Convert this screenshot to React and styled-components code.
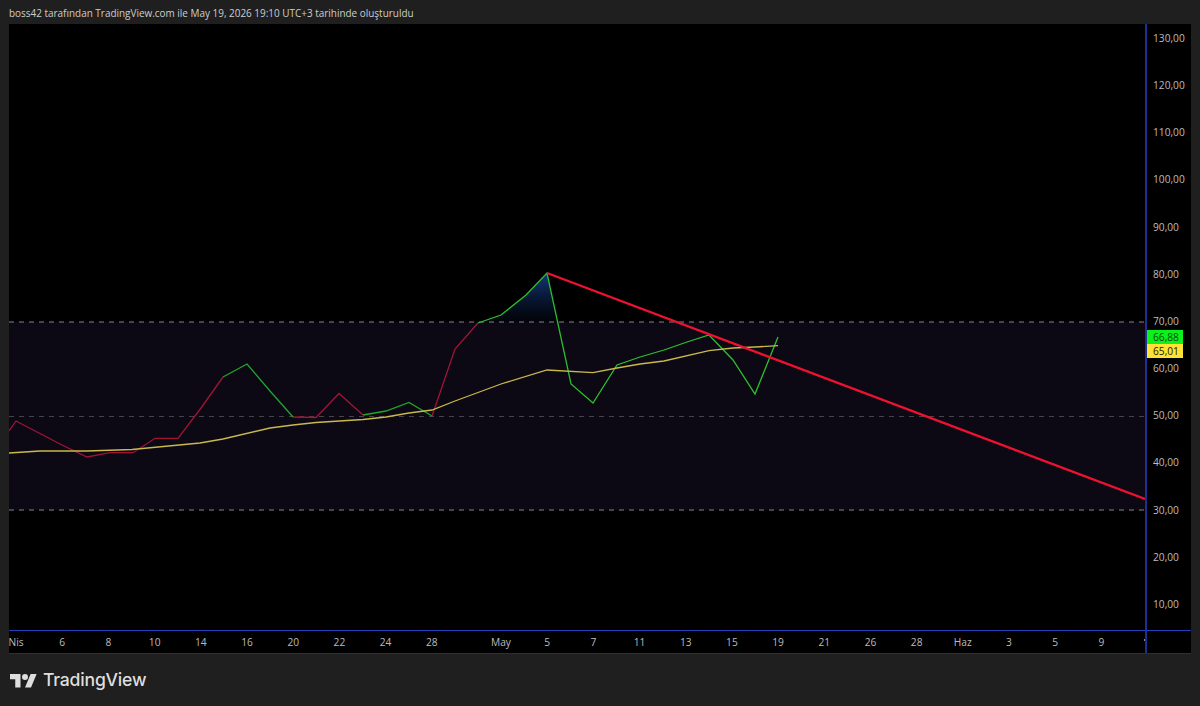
import styled, { createGlobalStyle } from "styled-components";

const GlobalStyle = createGlobalStyle`
  html, body {
    margin: 0;
    padding: 0;
    background: #1f1f1f;
  }
`;

const Page = styled.div`
  width: 1200px;
  height: 706px;
  display: flex;
  flex-direction: column;
  background: #1f1f1f;
  overflow: hidden;
  font-family: "Open Sans", "Liberation Sans", sans-serif;
`;

const Header = styled.div`
  height: 24px;
  padding: 7px 0 0 9px;
  box-sizing: border-box;
  font-size: 9.95px;
  line-height: 12px;
  color: #cdcdcd;
  white-space: nowrap;
`;

const Frame = styled.div`
  margin-left: 9px;
  width: 1182px;
  height: 630px;
  display: grid;
  grid-template-columns: 1136px 46px;
  grid-template-rows: 606px 23px;
  background: #000;
  border-bottom: 1px solid #303030;
  box-sizing: border-box;
`;

const Plot = styled.div`
  height: 606px;
  overflow: hidden;
`;

const ChartSvg = styled.svg`
  display: block;
`;

const PriceAxis = styled.div`
  position: relative;
  display: flex;
  flex-direction: column;
  gap: 35.17px;
  padding: 8px 0 0 6px;
  border-left: 2px solid #1b2f94;
`;

const Tick = styled.span`
  height: 12px;
  font-size: 10.2px;
  line-height: 12px;
  color: #bcbcbc;
`;

const PriceBadge = styled.span`
  position: absolute;
  left: 0;
  top: ${(p) => p.$top}px;
  width: 36px;
  height: 14px;
  padding-left: 6px;
  box-sizing: border-box;
  font-size: 10.2px;
  line-height: 14px;
  background: ${(p) => p.$bg};
  color: ${(p) => p.$fg};
`;

const TimeAxis = styled.div`
  display: flex;
  overflow: hidden;
  border-top: 1px solid #2440b8;
`;

const TimeTrack = styled.div`
  display: flex;
  margin-left: -16px;
  padding-top: 4px;
`;

const TimeLabel = styled.span`
  flex: 0 0 46.2px;
  margin-left: ${(p) => p.$offset || 0}px;
  text-align: center;
  font-size: 10.2px;
  line-height: 14px;
  color: #bcbcbc;
  font-weight: ${(p) => (p.$major ? 500 : 400)};
`;

const AxisCorner = styled.div`
  position: relative;
  border-top: 1px solid #2440b8;
  border-left: 2px solid #1b2f94;

  &::after {
    content: "";
    position: absolute;
    left: -3px;
    top: 8px;
    width: 1px;
    height: 2px;
    background: #8a8a8a;
  }
`;

const Footer = styled.div`
  flex: 1;
  display: flex;
  align-items: flex-start;
  gap: 6px;
  padding: 17px 0 0 10px;
`;

const Wordmark = styled.span`
  font-family: Inter, "Liberation Sans", sans-serif;
  font-size: 17.6px;
  font-weight: 500;
  line-height: 18px;
  letter-spacing: -0.2px;
  color: #dedede;
`;

const RSI_SEGMENTS = [
  { color: "#a01434", pts: "9,431 16,421 39,433 62,445 87,457 110,452.6 133,452.7 155,438.3 178,438.3 201,408 223,377" },
  { color: "#22a52a", pts: "223,377 247,364 270,391 293,417" },
  { color: "#a01434", pts: "293,417 316,417.5 339,393.5 363,415" },
  { color: "#22a52a", pts: "363,415 386,411 409,402.5 432,416" },
  { color: "#a01434", pts: "432,416 455,349 478,323" },
  { color: "#2cc02c", pts: "478,323 501,315 526,295 547,273 571,384 593,403 617,365 640,357 664,350 687,342 709,335 733,360 755,394 778,337" },
];

const RSI_MA =
  "9,453 40,451 87,451 132,449.5 200,443 223,439 270,428 293,425 316,422.5 363,419.5 386,417 409,413 432,410 455,401 501,384 547,370 593,372.7 617,368 640,364 664,361 709,350.7 733,348 755,347 778,345.7";

const PRICES = ["130,00", "120,00", "110,00", "100,00", "90,00", "80,00", "70,00", "60,00", "50,00", "40,00", "30,00", "20,00", "10,00"];

const DATES = [
  { label: "Nis", major: true },
  { label: "6" },
  { label: "8" },
  { label: "10" },
  { label: "14" },
  { label: "16" },
  { label: "20" },
  { label: "22" },
  { label: "24" },
  { label: "28" },
  { label: "May", major: true, offset: 23 },
  { label: "5" },
  { label: "7" },
  { label: "11" },
  { label: "13" },
  { label: "15" },
  { label: "19" },
  { label: "21" },
  { label: "26" },
  { label: "28" },
  { label: "Haz", major: true },
  { label: "3" },
  { label: "5" },
  { label: "9" },
];

const Chart = () => (
  <ChartSvg width="1136" height="606" viewBox="9 24 1136 606">
    <defs>
      <linearGradient id="peakFill" x1="0" y1="273" x2="0" y2="322" gradientUnits="userSpaceOnUse">
        <stop offset="0" stopColor="#123a80" />
        <stop offset="1" stopColor="#0a1a3a" stopOpacity="0.15" />
      </linearGradient>
    </defs>
    <rect x="9" y="322" width="1136" height="188" fill="#0c0914" />
    <polygon points="478,322 501,315 526,295 547,273 557.6,322" fill="url(#peakFill)" />
    <line x1="9" y1="322" x2="1145" y2="322" stroke="#85838c" strokeDasharray="5 5" />
    <line x1="9" y1="416.5" x2="1145" y2="416.5" stroke="#45434c" strokeDasharray="5 5" />
    <line x1="9" y1="510" x2="1145" y2="510" stroke="#85838c" strokeDasharray="5 5" />
    {RSI_SEGMENTS.map((seg) => (
      <polyline key={seg.pts} points={seg.pts} fill="none" stroke={seg.color} strokeWidth="1.3" />
    ))}
    <polyline points={RSI_MA} fill="none" stroke="#c9b84a" strokeWidth="1.3" />
    <line x1="547" y1="273" x2="1145" y2="499" stroke="#ee1230" strokeWidth="2.4" />
  </ChartSvg>
);

const Logo = () => (
  <svg width="27" height="21" viewBox="0 0 36 28" fill="#dedede">
    <path d="M14 22H7V11H0V4h14v18zM28 22h-8l7.5-18h8L28 22z" />
    <circle cx="20" cy="8" r="4" />
  </svg>
);

const App = () => (
  <Page>
    <GlobalStyle />
    <Header>boss42 tarafından TradingView.com ile May 19, 2026 19:10 UTC+3 tarihinde oluşturuldu</Header>
    <Frame>
      <Plot>
        <Chart />
      </Plot>
      <PriceAxis>
        {PRICES.map((p) => (
          <Tick key={p}>{p}</Tick>
        ))}
        <PriceBadge $top={306} $bg="#0cf01c" $fg="#0a4a12">66,88</PriceBadge>
        <PriceBadge $top={320} $bg="#ffe234" $fg="#1c1a00">65,01</PriceBadge>
      </PriceAxis>
      <TimeAxis>
        <TimeTrack>
          {DATES.map((d, i) => (
            <TimeLabel key={i} $major={d.major} $offset={d.offset}>
              {d.label}
            </TimeLabel>
          ))}
        </TimeTrack>
      </TimeAxis>
      <AxisCorner />
    </Frame>
    <Footer>
      <Logo />
      <Wordmark>TradingView</Wordmark>
    </Footer>
  </Page>
);

export default App;
